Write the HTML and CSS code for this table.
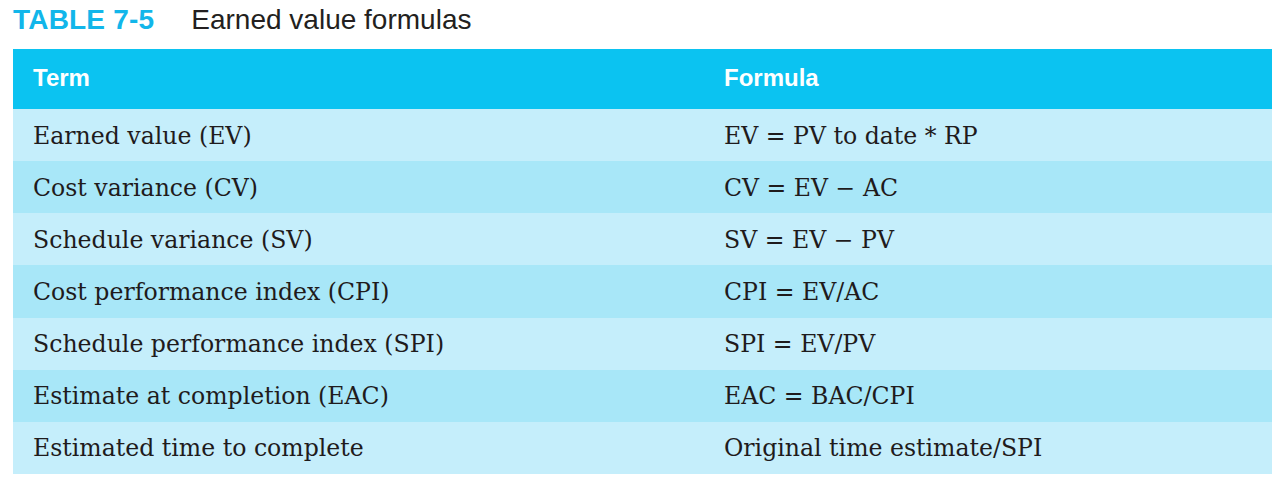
FILE: index.html
```html
<!DOCTYPE html>
<html>
<head>
<meta charset="utf-8">
<link rel="stylesheet" href="styles.css">
</head>
<body>
<div class="page">
  <h1 class="caption"><span class="label">TABLE 7-5</span><span class="title">Earned value formulas</span></h1>
  <div class="table">
    <div class="row head"><div class="c1">Term</div><div class="c2">Formula</div></div>
    <div class="row light"><div class="c1">Earned value (EV)</div><div class="c2">EV = PV to date * RP</div></div>
    <div class="row dark"><div class="c1">Cost variance (CV)</div><div class="c2">CV = EV − AC</div></div>
    <div class="row light"><div class="c1">Schedule variance (SV)</div><div class="c2">SV = EV − PV</div></div>
    <div class="row dark"><div class="c1">Cost performance index (CPI)</div><div class="c2">CPI = EV/AC</div></div>
    <div class="row light"><div class="c1">Schedule performance index (SPI)</div><div class="c2">SPI = EV/PV</div></div>
    <div class="row dark"><div class="c1">Estimate at completion (EAC)</div><div class="c2">EAC = BAC/CPI</div></div>
    <div class="row light"><div class="c1">Estimated time to complete</div><div class="c2">Original time estimate/SPI</div></div>
  </div>
</div>
</body>
</html>
```
FILE: styles.css
```css
html, body {
  margin: 0;
  padding: 0;
  background: #ffffff;
}
.page {
  padding: 4px 8px 0 13px;
}
.caption {
  margin: 0 0 13px 0;
  font-family: "Liberation Sans", Arial, sans-serif;
  font-size: 28px;
  line-height: 32px;
  font-weight: normal;
  display: flex;
  gap: 37px;
}
.label {
  color: #12b6ea;
  font-weight: bold;
  letter-spacing: 0.2px;
}
.title {
  color: #231f20;
}
.table {
  width: 1259px;
  display: flex;
  flex-direction: column;
}
.row {
  display: grid;
  grid-template-columns: 691px 1fr;
  align-items: center;
  height: 52.14px;
  font-family: "DejaVu Serif", serif;
  font-size: 23.6px;
  color: #1f1b1c;
  padding-top: 1px;
  box-sizing: border-box;
}
.row > div {
  padding-left: 20px;
}
.head {
  height: 60px;
  background: #0bc3f1;
  color: #ffffff;
  font-family: "Liberation Sans", Arial, sans-serif;
  font-weight: bold;
  font-size: 24px;
  padding-top: 0;
  padding-bottom: 3px;
}
.light {
  background: #c5eefb;
}
.dark {
  background: #a8e7f8;
}
```
